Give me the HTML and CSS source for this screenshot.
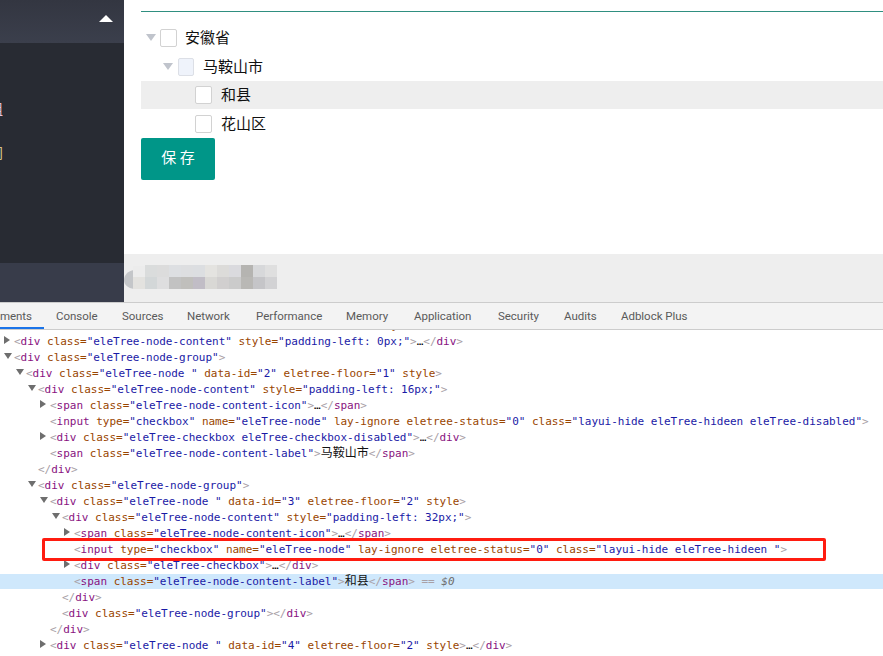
FILE: index.html
```html
<!DOCTYPE html>
<html lang="zh">
<head>
<meta charset="utf-8">
<title>eleTree</title>
<link rel="stylesheet" href="styles.css">
</head>
<body>
<div class="app">
  <div class="top">
    <aside class="sidebar">
      <div class="side-head"><span class="caret-up"></span></div>
      <div class="side-menu">
        <div class="side-item pink"><span>组</span></div>
        <div class="side-item amber"><span>间</span></div>
      </div>
      <div class="side-foot"></div>
    </aside>
    <main class="main">
      <div class="content">
        <div class="rule"></div>
        <div class="tree">
          <div class="node n0"><i class="tri"></i><i class="cb"></i><span>安徽省</span></div>
          <div class="node n1"><i class="tri"></i><i class="cb dis"></i><span>马鞍山市</span></div>
          <div class="node n2 hover"><i class="cb"></i><span>和县</span></div>
          <div class="node n2"><i class="cb"></i><span>花山区</span></div>
        </div>
        <button class="save">保 存</button>
      </div>
      <footer class="foot">
        <svg class="mosaic" width="153" height="24" viewBox="0 0 153 24">
          <path d="M10 5C4 6 0 10 0 15C0 20 4 23 10 24Z" fill="#c4c6c9"/>
          <rect x="9" y="1" width="12" height="11" fill="#ececec"/>
          <rect x="21" y="0" width="12" height="12" fill="#dadcdc"/>
          <rect x="33" y="0" width="12" height="12" fill="#dcdcdc"/>
          <rect x="45" y="0" width="12" height="12" fill="#dddfe2"/>
          <rect x="57" y="0" width="12" height="12" fill="#dddee0"/>
          <rect x="69" y="0" width="12" height="12" fill="#dcdee1"/>
          <rect x="81" y="0" width="12" height="12" fill="#e4e3e0"/>
          <rect x="93" y="0" width="12" height="12" fill="#dcdbd9"/>
          <rect x="105" y="0" width="12" height="12" fill="#dadade"/>
          <rect x="117" y="0" width="12" height="12" fill="#b5b4b1"/>
          <rect x="129" y="0" width="12" height="12" fill="#d7d8da"/>
          <rect x="141" y="0" width="12" height="12" fill="#dfdfdf"/>
          <rect x="9" y="12" width="12" height="12" fill="#e3e2df"/>
          <rect x="21" y="12" width="12" height="12" fill="#d3d7d8"/>
          <rect x="33" y="12" width="12" height="12" fill="#dededf"/>
          <rect x="45" y="12" width="12" height="12" fill="#c2c2c2"/>
          <rect x="57" y="12" width="12" height="12" fill="#c0bfbc"/>
          <rect x="69" y="12" width="12" height="12" fill="#c1bdc6"/>
          <rect x="81" y="12" width="12" height="12" fill="#d9d8d5"/>
          <rect x="93" y="12" width="12" height="12" fill="#d1cfcf"/>
          <rect x="105" y="12" width="12" height="12" fill="#cbcbcb"/>
          <rect x="117" y="12" width="12" height="12" fill="#b9b8b5"/>
          <rect x="129" y="12" width="12" height="12" fill="#c5c5c8"/>
          <rect x="141" y="12" width="12" height="12" fill="#d2d2d4"/>
        </svg>
      </footer>
    </main>
  </div>
  <section class="devtools">
    <nav class="tabs">
      <span class="tab active">Elements</span>
      <span class="tab">Console</span>
      <span class="tab">Sources</span>
      <span class="tab">Network</span>
      <span class="tab">Performance</span>
      <span class="tab">Memory</span>
      <span class="tab">Application</span>
      <span class="tab">Security</span>
      <span class="tab">Audits</span>
      <span class="tab">Adblock Plus</span>
    </nav>
    <div class="code">
      <div class="row l0 hidden-top"><b class="p">&lt;</b><b class="t">div</b> <b class="a">class=</b><b class="v">"eleTree-node "</b> <b class="a">data-id=</b><b class="v">"1"</b> <b class="a">eletree-floor=</b><b class="v">"0"</b> <b class="a">style</b><b class="p">&gt;</b></div>
      <div class="row l1"><i class="ar"></i><b class="p">&lt;</b><b class="t">div</b> <b class="a">class=</b><b class="v">"eleTree-node-content"</b> <b class="a">style=</b><b class="v">"padding-left: 0px;"</b><b class="p">&gt;</b>…<b class="p">&lt;/</b><b class="t">div</b><b class="p">&gt;</b></div>
      <div class="row l1"><i class="ar open"></i><b class="p">&lt;</b><b class="t">div</b> <b class="a">class=</b><b class="v">"eleTree-node-group"</b><b class="p">&gt;</b></div>
      <div class="row l2"><i class="ar open"></i><b class="p">&lt;</b><b class="t">div</b> <b class="a">class=</b><b class="v">"eleTree-node "</b> <b class="a">data-id=</b><b class="v">"2"</b> <b class="a">eletree-floor=</b><b class="v">"1"</b> <b class="a">style</b><b class="p">&gt;</b></div>
      <div class="row l3"><i class="ar open"></i><b class="p">&lt;</b><b class="t">div</b> <b class="a">class=</b><b class="v">"eleTree-node-content"</b> <b class="a">style=</b><b class="v">"padding-left: 16px;"</b><b class="p">&gt;</b></div>
      <div class="row l4"><i class="ar"></i><b class="p">&lt;</b><b class="t">span</b> <b class="a">class=</b><b class="v">"eleTree-node-content-icon"</b><b class="p">&gt;</b>…<b class="p">&lt;/</b><b class="t">span</b><b class="p">&gt;</b></div>
      <div class="row l4"><b class="p">&lt;</b><b class="t">input</b> <b class="a">type=</b><b class="v">"checkbox"</b> <b class="a">name=</b><b class="v">"eleTree-node"</b> <b class="a">lay-ignore eletree-status=</b><b class="v">"0"</b> <b class="a">class=</b><b class="v">"layui-hide eleTree-hideen eleTree-disabled"</b><b class="p">&gt;</b></div>
      <div class="row l4"><i class="ar"></i><b class="p">&lt;</b><b class="t">div</b> <b class="a">class=</b><b class="v">"eleTree-checkbox eleTree-checkbox-disabled"</b><b class="p">&gt;</b>…<b class="p">&lt;/</b><b class="t">div</b><b class="p">&gt;</b></div>
      <div class="row l4"><b class="p">&lt;</b><b class="t">span</b> <b class="a">class=</b><b class="v">"eleTree-node-content-label"</b><b class="p">&gt;</b><em class="zh">马鞍山市</em><b class="p">&lt;/</b><b class="t">span</b><b class="p">&gt;</b></div>
      <div class="row l3"><b class="p">&lt;/</b><b class="t">div</b><b class="p">&gt;</b></div>
      <div class="row l3"><i class="ar open"></i><b class="p">&lt;</b><b class="t">div</b> <b class="a">class=</b><b class="v">"eleTree-node-group"</b><b class="p">&gt;</b></div>
      <div class="row l4"><i class="ar open"></i><b class="p">&lt;</b><b class="t">div</b> <b class="a">class=</b><b class="v">"eleTree-node "</b> <b class="a">data-id=</b><b class="v">"3"</b> <b class="a">eletree-floor=</b><b class="v">"2"</b> <b class="a">style</b><b class="p">&gt;</b></div>
      <div class="row l5"><i class="ar open"></i><b class="p">&lt;</b><b class="t">div</b> <b class="a">class=</b><b class="v">"eleTree-node-content"</b> <b class="a">style=</b><b class="v">"padding-left: 32px;"</b><b class="p">&gt;</b></div>
      <div class="row l6"><i class="ar"></i><b class="p">&lt;</b><b class="t">span</b> <b class="a">class=</b><b class="v">"eleTree-node-content-icon"</b><b class="p">&gt;</b>…<b class="p">&lt;/</b><b class="t">span</b><b class="p">&gt;</b></div>
      <div class="row l6"><b class="p">&lt;</b><b class="t">input</b> <b class="a">type=</b><b class="v">"checkbox"</b> <b class="a">name=</b><b class="v">"eleTree-node"</b> <b class="a">lay-ignore eletree-status=</b><b class="v">"0"</b> <b class="a">class=</b><b class="v">"layui-hide eleTree-hideen "</b><b class="p">&gt;</b></div>
      <div class="row l6"><i class="ar"></i><b class="p">&lt;</b><b class="t">div</b> <b class="a">class=</b><b class="v">"eleTree-checkbox"</b><b class="p">&gt;</b>…<b class="p">&lt;/</b><b class="t">div</b><b class="p">&gt;</b></div>
      <div class="row l6 selected"><b class="p">&lt;</b><b class="t">span</b> <b class="a">class=</b><b class="v">"eleTree-node-content-label"</b><b class="p">&gt;</b><em class="zh">和县</em><b class="p">&lt;/</b><b class="t">span</b><b class="p">&gt;</b> <b class="p">==</b> <em class="dollar">$0</em></div>
      <div class="row l5"><b class="p">&lt;/</b><b class="t">div</b><b class="p">&gt;</b></div>
      <div class="row l5"><b class="p">&lt;</b><b class="t">div</b> <b class="a">class=</b><b class="v">"eleTree-node-group"</b><b class="p">&gt;&lt;/</b><b class="t">div</b><b class="p">&gt;</b></div>
      <div class="row l4"><b class="p">&lt;/</b><b class="t">div</b><b class="p">&gt;</b></div>
      <div class="row l4"><i class="ar"></i><b class="p">&lt;</b><b class="t">div</b> <b class="a">class=</b><b class="v">"eleTree-node "</b> <b class="a">data-id=</b><b class="v">"4"</b> <b class="a">eletree-floor=</b><b class="v">"2"</b> <b class="a">style</b><b class="p">&gt;</b>…<b class="p">&lt;/</b><b class="t">div</b><b class="p">&gt;</b></div>
      <div class="redbox"></div>
    </div>
  </section>
</div>
</body>
</html>
```

FILE: styles.css
```css
* { box-sizing: border-box; }
html, body { margin: 0; padding: 0; background: #fff; }
.app { width: 883px; height: 656px; overflow: hidden; display: flex; flex-direction: column; }

/* page under inspection */
.top { display: flex; height: 302px; flex: none; }
.sidebar { width: 124px; flex: none; display: flex; flex-direction: column; background: #282b33; }
.side-head { height: 43px; background: linear-gradient(#333641, #3b3f4c); display: flex; justify-content: flex-end; align-items: flex-start; padding: 15px 11px 0 0; }
.caret-up { width: 0; height: 0; border-left: 7px solid transparent; border-right: 7px solid transparent; border-bottom: 7px solid #fff; }
.side-menu { flex: 1; padding-top: 55px; display: flex; flex-direction: column; gap: 24px; }
.side-item { width: 3px; height: 20px; overflow: hidden; display: flex; justify-content: flex-end; font: 14px/20px "Noto Sans CJK SC", sans-serif; white-space: nowrap; }
.side-item span { flex: none; }
.pink { color: #e8c4dc; }
.amber { color: #d8c48c; }
.side-foot { height: 39px; background: #383c4a; }

.main { flex: 1; min-width: 0; display: flex; flex-direction: column; }
.content { flex: 1; padding: 11px 0 0 17px; }
.rule { height: 1px; background: #2f8f80; }
.tree { margin-top: 11px; font: 15px/20px "Noto Sans CJK SC", sans-serif; color: #111; }
.tree span { margin-top: -2px; }
.node { height: 29px; display: flex; align-items: center; }
.node:nth-child(3) { height: 28px; }
.n0 { padding-left: 5px; }
.n1 { padding-left: 22px; }
.n2 { padding-left: 54px; }
.hover { background: #eee; }
.tri { width: 0; height: 0; border-left: 5.5px solid transparent; border-right: 5.5px solid transparent; border-top: 7px solid #c0c4cc; margin-right: 4px; }
.n1 .tri { margin-right: 5px; }
.cb { width: 17px; height: 18px; flex: none; border: 1px solid #d2d2d2; border-radius: 2px; background: #fff; margin-right: 8px; }
.cb.dis { width: 16px; background: #eff3fb; border-color: #dcdfe6; margin-right: 9px; }
.n2 .cb { margin-right: 9px; }
.save { display: block; width: 74px; height: 42px; border: 0; border-radius: 2px; background: #009688; color: #fff; font: 15px/38px "Noto Sans CJK SC", sans-serif; padding: 0 0 4px 0; }
.foot { height: 48px; flex: none; background: #eee; padding: 11px 0 0 0; }
.mosaic { display: block; }

/* devtools */
.devtools { flex: 1; min-height: 0; display: flex; flex-direction: column; }
.tabs { height: 28px; flex: none; display: flex; background: #f3f3f3; border-top: 1px solid #ccc; border-bottom: 1px solid #ccc; font: 11.5px/25px Roboto, sans-serif; letter-spacing: -0.03px; color: #5a5a5a; overflow: hidden; }
.tab { padding: 1px 0 0 12px; flex: none; white-space: nowrap; }
.tab:nth-child(2) { width: 66px; }
.tab:nth-child(3) { width: 65px; }
.tab:nth-child(4) { width: 69px; }
.tab:nth-child(5) { width: 90px; }
.tab:nth-child(6) { width: 68px; }
.tab:nth-child(7) { width: 84px; }
.tab:nth-child(8) { width: 66px; }
.tab:nth-child(9) { width: 57px; }
.tab.active { width: 44px; display: flex; justify-content: flex-end; box-shadow: inset 0 -2px 0 #1a73e8; padding: 1px 12px 0 0; }
.code { position: relative; flex: 1; min-height: 0; overflow: hidden; font: 11px/15px "DejaVu Sans Mono", monospace; letter-spacing: -0.022px; }
.row { height: 15px; margin-bottom: 1px; white-space: pre; }
.hidden-top { margin-top: -12px; }
.l0 { padding-left: 2px; }
.l1 { padding-left: 14px; }
.l2 { padding-left: 26px; }
.l3 { padding-left: 38px; }
.l4 { padding-left: 50px; }
.l5 { padding-left: 62px; }
.l6 { padding-left: 74px; }
.selected { background: #cfe8fc; }
.row b { font-weight: normal; }
.row i.ar { display: inline-block; width: 0; height: 0; margin-left: -10px; margin-right: 4px; vertical-align: 1px; border-left: 6px solid #6e6e6e; border-top: 4px solid transparent; border-bottom: 4px solid transparent; }
.row i.ar.open { border-left: 4px solid transparent; border-right: 4px solid transparent; border-top: 6px solid #6e6e6e; border-bottom: 0; margin-right: 2px; vertical-align: 2px; }
.t { color: #881280; }
.a { color: #994500; }
.v { color: #1a1aa6; }
.p { color: #a8a0a6; }
.zh { font: normal 12px/0 "Noto Sans CJK SC", sans-serif; color: #111; letter-spacing: 0; }
.dollar { font-style: italic; color: #6e6e6e; }
.redbox { position: absolute; left: 42px; top: 208px; width: 784px; height: 23px; border: 3px solid #ff1c10; border-radius: 2px; }
```
